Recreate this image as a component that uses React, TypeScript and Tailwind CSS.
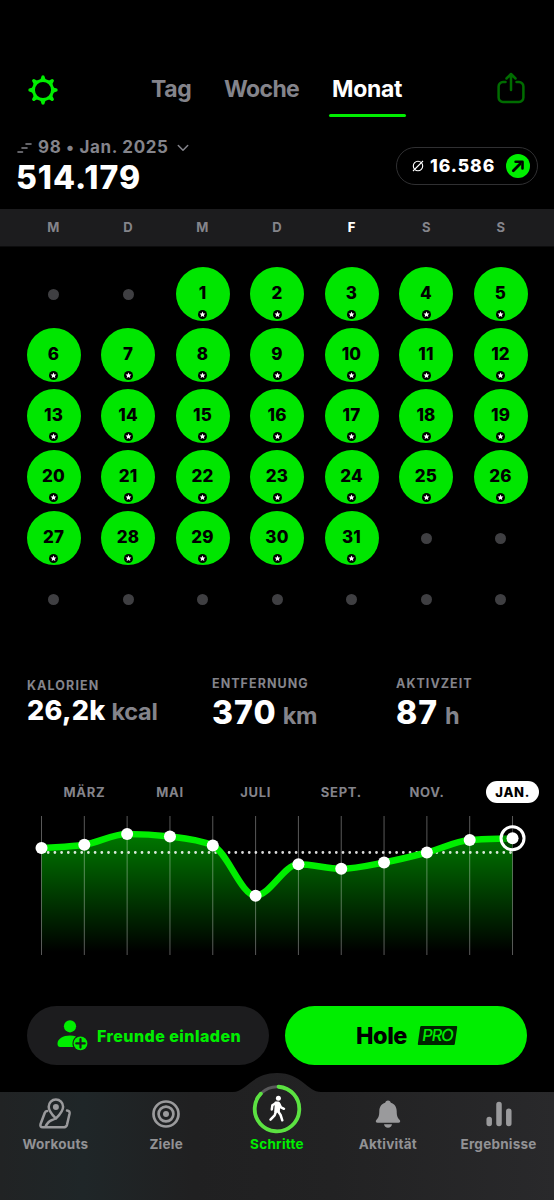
import type React from 'react';

const FONT = "font-['Inter','Noto_Sans',sans-serif]";

const WEEKDAYS = ['M', 'D', 'M', 'D', 'F', 'S', 'S'];
const TODAY_COLUMN = 4;
const FIRST_DAY_OFFSET = 2;
const DAYS_IN_MONTH = 31;
const CELL_COUNT = 42;

const MONTH_LABELS = ['MÄRZ', 'MAI', 'JULI', 'SEPT.', 'NOV.', 'JAN.'];
const CHART_Y = [32, 28.7, 18, 20.5, 29.5, 79.7, 48.3, 52.8, 46.5, 36.5, 24, 22.3];
const CHART_POINTS = CHART_Y.map((y, i) => ({ x: 41.5 + i * 42.82, y }));

type Point = { x: number; y: number };

/** Monotone cubic curve through the points */
function monotonePath(points: Point[]) {
  const slopes = points
    .slice(1)
    .map((p, i) => (p.y - points[i].y) / (p.x - points[i].x));
  const tangents = points.map((_, i) => {
    if (i === 0) return slopes[0];
    if (i === points.length - 1) return slopes[i - 1];
    const a = slopes[i - 1];
    const b = slopes[i];
    if (a * b <= 0) return 0;
    const t = Math.min(Math.abs(a), Math.abs(b), Math.abs(a + b) / 4);
    return 2 * t * Math.sign(a);
  });
  return points.slice(1).reduce((d, p, i) => {
    const prev = points[i];
    const dx = (p.x - prev.x) / 3;
    return `${d} C${prev.x + dx} ${prev.y + dx * tangents[i]} ${p.x - dx} ${p.y - dx * tangents[i + 1]} ${p.x} ${p.y}`;
  }, `M${points[0].x} ${points[0].y}`);
}

function GearIcon() {
  return (
    <svg viewBox="-15 -15 30 30" className="w-[30px] h-[30px]" fill="#00ee00">
      <circle r="9.5" fill="none" stroke="#00ee00" strokeWidth="2.9" />
      {[0, 45, 90, 135, 180, 225, 270, 315].map((angle) => (
        <path
          key={angle}
          transform={`rotate(${angle})`}
          d="M-3.8-9.8Q-2-10.8-1.7-13A1.7 1.7 0 0 1 1.7-13Q2-10.8 3.8-9.8Z"
        />
      ))}
    </svg>
  );
}

function ShareIcon() {
  return (
    <svg
      viewBox="0 0 28 32"
      className="w-[28px] h-[32px]"
      fill="none"
      stroke="#006c00"
      strokeWidth="2.5"
      strokeLinecap="round"
      strokeLinejoin="round"
    >
      <path d="M8.500 10H6a4.400 4.400 0 0 0-4.400 4.400V25.600A4.400 4.400 0 0 0 6 30H22a4.400 4.400 0 0 0 4.400-4.400V14.400A4.400 4.400 0 0 0 22 10H19.500M14 18V2.500M9.500 6.500 14 2l4.500 4.500" />
    </svg>
  );
}

function MapPinIcon() {
  return (
    <svg
      viewBox="0 0 34 32"
      className="w-[34px] h-[32px]"
      fill="none"
      stroke="#9a9a9c"
      strokeWidth="2.5"
      strokeLinecap="round"
      strokeLinejoin="round"
    >
      <path d="M9.200 13Q7.400 13 6.700 15L2.500 26.300Q1.900 29.300 4.600 29.300H25.500Q28.200 29.300 29 26.800L31.600 15.500Q32 12.700 29 12.500" />
      <path d="M7.500 28.800Q10 23.500 13.500 22.300T18 20" />
      <path d="M17.900 20.500C15 17.600 10.700 13.500 10.700 8.700a7.200 7.200 0 0 1 14.400 0C25.100 13.500 20.800 17.600 17.900 20.500Z" />
      <circle cx="17.900" cy="9" r="3" fill="#9a9a9c" stroke="none" />
    </svg>
  );
}

function TargetIcon() {
  return (
    <svg viewBox="-14 -14 28 28" className="w-[28px] h-[28px]" fill="none" stroke="#9a9a9c">
      <circle r="12.500" strokeWidth="2.700" />
      <circle r="7.400" strokeWidth="2.700" />
      <circle r="3" fill="#9a9a9c" stroke="none" />
    </svg>
  );
}

function BellIcon() {
  return (
    <svg viewBox="0 0 26 28" className="w-[26px] h-[28px]" fill="#9a9a9c">
      <path d="M13 .5C11.300.5 10.400 1.600 10.200 2.700 6.300 3.900 4.400 7 4.300 11 4.200 16 3.700 17.300 1.500 19.800.2 21.300.8 22.700 2.500 22.700H23.500C25.200 22.700 25.800 21.300 24.500 19.800 22.300 17.300 21.800 16 21.700 11 21.600 7 19.700 3.900 15.800 2.700 15.600 1.600 14.700.5 13 .5Z" />
      <path d="M9 24.200H17C16.600 26.300 15.200 27.700 13 27.700S9.400 26.300 9 24.200Z" />
    </svg>
  );
}

function BarsIcon() {
  return (
    <svg
      viewBox="0 0 26 26"
      className="w-[26px] h-[26px]"
      stroke="#9a9a9c"
      strokeWidth="5.500"
      strokeLinecap="round"
    >
      <path d="M3.200 18.500V22.600M13 3.400V22.600M22.800 10.300V22.600" />
    </svg>
  );
}

function InviteIcon() {
  return (
    <svg viewBox="0 0 31 31" className="w-[31px] h-[31px]" fill="#00ee00">
      <circle cx="13" cy="6.300" r="6.100" />
      <path d="M.5 23.500C.5 19 6 15.500 13 15.500c2.200 0 4.300.4 6 1C16 18.500 14.500 23.500 16.300 27H3.200C1.200 27 .5 25.800.5 23.500Z" />
      <circle cx="23.500" cy="23.400" r="6.900" />
      <path d="M23.500 19.200V27.600M19.300 23.400H27.700" stroke="#1c1c1e" strokeWidth="2.200" strokeLinecap="round" />
    </svg>
  );
}

function StepsRing() {
  return (
    <svg viewBox="-25 -25 50 50" className="w-[50px] h-[50px]" fill="none">
      <circle r="22.300" stroke="#59595b" strokeWidth="3" />
      <circle
        r="22.300"
        stroke="#5be241"
        strokeWidth="3.800"
        strokeLinecap="round"
        pathLength="100"
        strokeDasharray="86 14"
        transform="rotate(-86)"
      />
      <circle cx="1.400" cy="-10.700" r="2.500" fill="#fff" />
      <path
        d="M-1.500-6.500 1.500-6.500 2.600-4.500 1.900 2.500-1.900 2.500-1.500-3Z"
        fill="#fff"
        stroke="#fff"
        strokeWidth="1.800"
        strokeLinejoin="round"
      />
      <path
        d="M-1-6-4.600-3.800-5.200.4M2-5.500 4-1.600 7-.2M-1 2.500-2.400 6.300-6.500 10.600M1.200 2.500 3.600 6 5.300 11.300"
        stroke="#fff"
        strokeWidth="2.500"
        strokeLinecap="round"
        strokeLinejoin="round"
      />
    </svg>
  );
}

function Header() {
  return (
    <header className="flex h-[120px] pt-[60px]">
      <div className="ml-[28px] mt-[15px]">
        <GearIcon />
      </div>
      <nav className="ml-[93px] flex gap-[33px] text-[23px] leading-[30px] font-bold text-[#84848b]">
        <span className="mt-[14px] w-[40px] whitespace-nowrap tracking-[-0.400px]">Tag</span>
        <span className="mt-[14px] w-[75px] whitespace-nowrap tracking-[-0.650px]">Woche</span>
        <div className="flex flex-col items-center">
          <span className="mt-[14px] w-[70px] whitespace-nowrap text-white tracking-[-0.300px]">Monat</span>
          <div className="-mx-1 mt-[9.500px] h-[3px] w-[77px] rounded-full bg-[#00ee00]" />
        </div>
      </nav>
      <div className="ml-auto mr-[29px] mt-[12px]">
        <ShareIcon />
      </div>
    </header>
  );
}

function Summary() {
  return (
    <section className="flex h-[89px] justify-between pl-[17px] pr-[16px]">
      <div>
        <div className="mt-[17px] flex h-[22px] items-center text-[17px] font-bold text-[#84848b]">
          <svg viewBox="0 0 15 10" className="h-[10px] w-[15px]" stroke="#84848b" strokeWidth="1.600" strokeLinecap="round">
            <path d="M1 9H5.500M5 5H10M9 1H14" />
          </svg>
          <span className="ml-[6px] w-[132px] whitespace-nowrap tracking-[0.650px]">98 • Jan. 2025</span>
          <svg viewBox="0 0 12 8" className="ml-[7px] h-[8px] w-[12px]" fill="none" stroke="#84848b" strokeWidth="1.500" strokeLinecap="round" strokeLinejoin="round">
            <path d="M1.300 1.500 6 6.300 10.700 1.500" />
          </svg>
        </div>
        <div className="-ml-px text-[32px] leading-[38px] font-extrabold tracking-[1px] text-white">514.179</div>
      </div>
      <div className="mt-[27px] flex h-[38px] w-[142px] items-center rounded-full border border-[#303032] pl-[15px] text-white">
        <svg viewBox="0 0 12 12" className="h-[12px] w-[12px]" fill="none" stroke="#fff" strokeWidth="1.100">
          <circle cx="6" cy="6" r="4.700" />
          <path d="M1 11 11 1" />
        </svg>
        <span className="ml-[6px] mt-px w-[65px] whitespace-nowrap text-[17.500px] font-extrabold tracking-[0.950px]">16.586</span>
        <svg viewBox="0 0 24 24" className="ml-[11px] h-[24px] w-[24px]" fill="none">
          <circle cx="12" cy="12" r="12" fill="#00ee00" />
          <path d="M7.300 16.700 14 10" stroke="#000" strokeWidth="2.800" strokeLinecap="round" />
          <path d="M9.600 7.700H16.500V14.500" stroke="#000" strokeWidth="2.600" strokeLinecap="round" strokeLinejoin="round" />
        </svg>
      </div>
    </section>
  );
}

function DayCell({ day }: { day: number }) {
  if (day < 1 || day > DAYS_IN_MONTH) {
    return (
      <div className="flex h-[61px] items-center justify-center">
        <div className="h-[11px] w-[11px] rounded-full bg-[#3f3f42]" />
      </div>
    );
  }
  return (
    <div className="flex h-[61px] items-center justify-center">
      <div className="flex h-[54px] w-[54px] flex-col items-center rounded-full bg-[#00e600]">
        <span className="mt-[16px] text-[17px] leading-[20px] font-extrabold tracking-[0.200px] text-black">{day}</span>
        <svg viewBox="-5 -5 10 10" className="mt-[6.500px] h-[9px] w-[9px]">
          <circle r="5" />
          <path
            d="M0-3.300 1-1.200 3.200-1 1.600.6 2 2.800 0 1.700-2 2.800-1.600.6-3.200-1-1-1.200Z"
            fill="#fff"
          />
        </svg>
      </div>
    </div>
  );
}

function Calendar() {
  return (
    <section>
      <div className="grid h-[38px] grid-cols-7 items-center border-b border-[#0c0c0d] bg-[#1c1c1e] px-4 pt-[2px] text-center text-[13px] font-bold text-[#84848b]">
        {WEEKDAYS.map((name, i) => (
          <span key={i} className={i === TODAY_COLUMN ? 'font-extrabold text-white' : ''}>
            {name}
          </span>
        ))}
      </div>
      <div className="mt-[17px] grid grid-cols-7 pl-[16.250px] pr-[16.250px]">
        {Array.from({ length: CELL_COUNT }, (_, i) => (
          <DayCell key={i} day={i + 1 - FIRST_DAY_OFFSET} />
        ))}
      </div>
    </section>
  );
}

function Stats() {
  return (
    <section className="mt-[46px] flex h-[80px] pl-[27px]">
      <div className="w-[185px] pt-[2px]">
        <div className="text-[12.500px] leading-[16px] font-bold tracking-[1.100px] text-[#84848b]">KALORIEN</div>
        <div className="flex items-baseline gap-[6px] leading-[34px]">
          <span className="text-[27px] font-extrabold tracking-[0.300px] text-white">26,2k</span>
          <span className="text-[23.500px] font-bold tracking-[-0.300px] text-[#84848b]">kcal</span>
        </div>
      </div>
      <div className="w-[184px]">
        <div className="text-[12.500px] leading-[16px] font-bold tracking-[1.050px] text-[#84848b]">ENTFERNUNG</div>
        <div className="flex items-baseline gap-[6px] leading-[41px]">
          <span className="text-[32px] font-extrabold tracking-[1.100px] text-white">370</span>
          <span className="text-[23.500px] font-bold tracking-[-0.300px] text-[#84848b]">km</span>
        </div>
      </div>
      <div>
        <div className="text-[12.500px] leading-[16px] font-bold tracking-[1.050px] text-[#84848b]">AKTIVZEIT</div>
        <div className="flex items-baseline gap-[7px] leading-[41px]">
          <span className="text-[32px] font-extrabold tracking-[1px] text-white">87</span>
          <span className="text-[23.500px] font-bold text-[#84848b]">h</span>
        </div>
      </div>
    </section>
  );
}

function TrendChart() {
  const line = monotonePath(CHART_POINTS);
  const last = CHART_POINTS[CHART_POINTS.length - 1];
  return (
    <section className="mt-[25px]">
      <div className="grid h-[24px] w-[514px] grid-cols-6 items-center ml-[41.500px] text-center text-[13px] font-bold tracking-[0.700px] text-[#84848b]">
        {MONTH_LABELS.map((label, i) => (
          <span
            key={label}
            className={
              i === MONTH_LABELS.length - 1
                ? 'mx-auto h-[22px] w-[53px] rounded-full bg-white font-extrabold leading-[22px] text-black'
                : ''
            }
          >
            {label}
          </span>
        ))}
      </div>
      <svg viewBox="0 0 554 144" className="mt-[12px] block h-[144px] w-[554px]" fill="none">
        <defs>
          <linearGradient id="area" x1="0" y1="18" x2="0" y2="136" gradientUnits="userSpaceOnUse">
            <stop offset="0" stopColor="#007800" />
            <stop offset="1" stopColor="#000" />
          </linearGradient>
        </defs>
        <path d={`${line} V139 H${CHART_POINTS[0].x} Z`} fill="url(#area)" />
        {CHART_POINTS.map((p) => (
          <path key={p.x} d={`M${p.x} 0V139`} stroke="#fff" strokeOpacity="0.350" strokeWidth="1" />
        ))}
        <path
          d={`M41.500 36.500H${last.x}`}
          stroke="#fff"
          strokeOpacity="0.850"
          strokeWidth="2.800"
          strokeLinecap="round"
          strokeDasharray="0 6.700"
        />
        <path d={line} stroke="#00ee00" strokeWidth="6.500" />
        <circle cx={last.x} cy={last.y} r="11.500" fill="#000" fillOpacity="0.350" stroke="#fff" strokeWidth="3" />
        {CHART_POINTS.map((p) => (
          <circle key={p.x} cx={p.x} cy={p.y} r="6" fill="#fff" />
        ))}
      </svg>
    </section>
  );
}

function Actions() {
  return (
    <section className="mt-[46px] flex gap-[16px] px-[27px]">
      <button className="flex h-[59px] w-[242px] items-center rounded-full bg-[#1c1c1e] pl-[30px] text-[#00ee00]">
        <InviteIcon />
        <span className="ml-[9px] whitespace-nowrap text-[16px] font-extrabold tracking-[0.450px]">Freunde einladen</span>
      </button>
      <button className="flex h-[59px] w-[242px] items-center rounded-full bg-[#00ee00] pl-[71px] text-black">
        <span className="w-[52px] text-left text-[23.500px] font-extrabold tracking-[-0.500px]">Hole</span>
        <span className="ml-[11px] flex h-[19px] w-[37px] -skew-x-[8deg] items-center justify-center rounded-[1px] bg-[#002400] text-[16.500px] leading-[19px] font-medium tracking-[-1.200px] text-[#00ee00]">
          PRO
        </span>
      </button>
    </section>
  );
}

function TabItem({
  label,
  active,
  children,
}: {
  label: string;
  active?: boolean;
  children: React.ReactNode;
}) {
  return (
    <div className="flex flex-1 flex-col items-center">
      <div className="flex h-[66px] items-center pt-[17px]">{children}</div>
      <span
        className={
          active
            ? 'mt-[-3px] text-[13.500px] leading-[18px] font-bold tracking-[0.250px] text-[#00ee00]'
            : 'mt-[-3px] text-[13.500px] leading-[18px] font-bold tracking-[0.250px] text-[#929295]'
        }
      >
        {label}
      </span>
    </div>
  );
}

function TabBar() {
  return (
    <footer className="relative mt-[7px] h-[128px]">
      <svg viewBox="0 0 554 128" className="absolute inset-0 h-[128px] w-[554px]">
        <defs>
          <linearGradient id="bar" x1="0" y1="0" x2="1" y2="0">
            <stop offset="0" stopColor="#212324" />
            <stop offset="0.150" stopColor="#1f2628" />
            <stop offset="0.350" stopColor="#202021" />
            <stop offset="0.600" stopColor="#222223" />
            <stop offset="1" stopColor="#29292b" />
          </linearGradient>
        </defs>
        <path d="M0 20H233C246 20 252 1 277 1S307 20 321 20H554V128H0Z" fill="url(#bar)" />
      </svg>
      <nav className="relative flex">
        <TabItem label="Workouts">
          <MapPinIcon />
        </TabItem>
        <TabItem label="Ziele">
          <TargetIcon />
        </TabItem>
        <TabItem label="Schritte" active>
          <div className="-mt-[9px]">
            <StepsRing />
          </div>
        </TabItem>
        <TabItem label="Aktivität">
          <BellIcon />
        </TabItem>
        <TabItem label="Ergebnisse">
          <BarsIcon />
        </TabItem>
      </nav>
    </footer>
  );
}

export default function App() {
  return (
    <div className={`flex h-[1200px] w-[554px] flex-col overflow-hidden bg-black ${FONT}`}>
      <Header />
      <Summary />
      <Calendar />
      <Stats />
      <TrendChart />
      <Actions />
      <TabBar />
    </div>
  );
}
